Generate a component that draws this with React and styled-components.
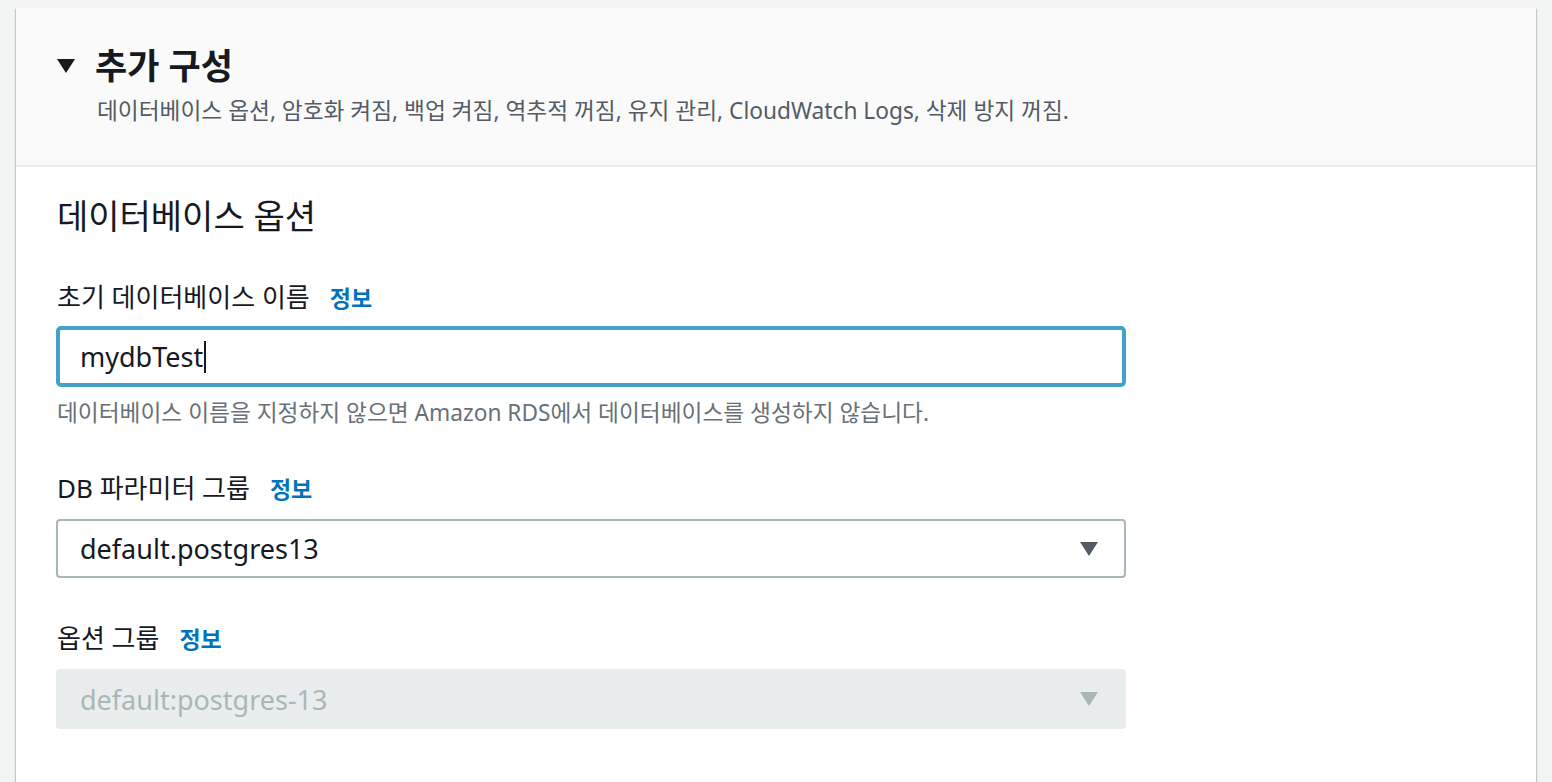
import React from 'react';
import styled, { createGlobalStyle } from 'styled-components';

const GlobalStyle = createGlobalStyle`
  body {
    margin: 0;
    background: #f2f3f3;
    font-family: "Noto Sans", "Noto Sans CJK KR", sans-serif;
    color: #16191f;
  }
`;

const Page = styled.div`
  padding: 8px 16px 0 16px;
  height: 774px;
  overflow: hidden;
`;

const Card = styled.section`
  width: 1520px;
  min-height: 800px;
  background: #ffffff;
  box-shadow: 0 1px 1px 0 rgba(0, 28, 36, 0.3), 1px 1px 1px 0 rgba(0, 28, 36, 0.15),
    -1px 1px 1px 0 rgba(0, 28, 36, 0.15);
`;

const Header = styled.header`
  height: 159px;
  box-sizing: border-box;
  background: #fafafa;
  border-bottom: 2px solid #eaeded;
  padding: 36px 40px 0 41px;
`;

const TitleRow = styled.div`
  display: flex;
  align-items: center;
  gap: 20px;
  height: 44px;
`;

const Caret = styled.span`
  width: 0;
  height: 0;
  border-left: 9.5px solid transparent;
  border-right: 9.5px solid transparent;
  border-top: 14px solid ${(p) => p.color || '#16191f'};
  display: inline-block;
`;

const Title = styled.h2`
  margin: 0;
  font-size: 35px;
  font-weight: 700;
  line-height: 44px;
  color: #16191f;
`;

const Subtitle = styled.p`
  margin: 8px 0 0 40px;
  font-size: 22.7px;
  line-height: 30px;
  color: #545b64;
`;

const Body = styled.div`
  padding: 28px 40px 40px 40px;
  width: 1070px;
`;

const SectionTitle = styled.h3`
  margin: 0 0 0 1px;
  font-size: 34px;
  font-weight: 400;
  line-height: 42px;
  color: #16191f;
`;

const Field = styled.div`
  margin-top: ${(p) => p.$top || 44}px;
`;

const Label = styled.div`
  display: flex;
  align-items: baseline;
  gap: 20px;
  margin-left: 1px;
  font-size: 26px;
  line-height: 32px;
  color: #16191f;
`;

const InfoLink = styled.a`
  font-size: 23px;
  font-weight: 700;
  color: #0073bb;
  text-decoration: none;
`;

const Input = styled.div`
  margin-top: 12px;
  height: 61px;
  box-sizing: border-box;
  border: 4px solid #44a2c8;
  border-radius: 5px;
  display: flex;
  align-items: center;
  padding-left: 20px;
  font-size: 27px;
  color: #16191f;
`;

const TextCaret = styled.span`
  display: inline-block;
  width: 2px;
  height: 32px;
  background: #16191f;
  margin-left: 1px;
`;

const Hint = styled.p`
  margin: 11px 0 0 1px;
  font-size: 22.7px;
  line-height: 30px;
  color: #687078;
`;

const Select = styled.div`
  margin-top: 14px;
  height: ${(p) => (p.$disabled ? 60 : 59)}px;
  box-sizing: border-box;
  border: 2px solid ${(p) => (p.$disabled ? '#eaeded' : '#aab7b8')};
  background: ${(p) => (p.$disabled ? '#eaeded' : '#ffffff')};
  border-radius: 4px;
  display: flex;
  align-items: center;
  justify-content: space-between;
  padding: 0 26px 0 22px;
  font-size: 27px;
  color: ${(p) => (p.$disabled ? '#aab7b8' : '#16191f')};
`;

function App() {
  return (
    <>
      <GlobalStyle />
      <Page>
        <Card>
          <Header>
            <TitleRow>
              <Caret />
              <Title>추가 구성</Title>
            </TitleRow>
            <Subtitle>
              데이터베이스 옵션, 암호화 켜짐, 백업 켜짐, 역추적 꺼짐, 유지 관리, CloudWatch Logs, 삭제 방지 꺼짐.
            </Subtitle>
          </Header>
          <Body>
            <SectionTitle>데이터베이스 옵션</SectionTitle>
            <Field $top={44}>
              <Label>
                초기 데이터베이스 이름 <InfoLink href="#">정보</InfoLink>
              </Label>
              <Input>
                mydbTest
                <TextCaret />
              </Input>
              <Hint>데이터베이스 이름을 지정하지 않으면 Amazon RDS에서 데이터베이스를 생성하지 않습니다.</Hint>
            </Field>
            <Field $top={44}>
              <Label>
                DB 파라미터 그룹 <InfoLink href="#">정보</InfoLink>
              </Label>
              <Select>
                default.postgres13
                <Caret color="#545b64" />
              </Select>
            </Field>
            <Field $top={44}>
              <Label>
                옵션 그룹 <InfoLink href="#">정보</InfoLink>
              </Label>
              <Select $disabled>
                default:postgres-13
                <Caret color="#aab7b8" />
              </Select>
            </Field>
          </Body>
        </Card>
      </Page>
    </>
  );
}

export default App;
